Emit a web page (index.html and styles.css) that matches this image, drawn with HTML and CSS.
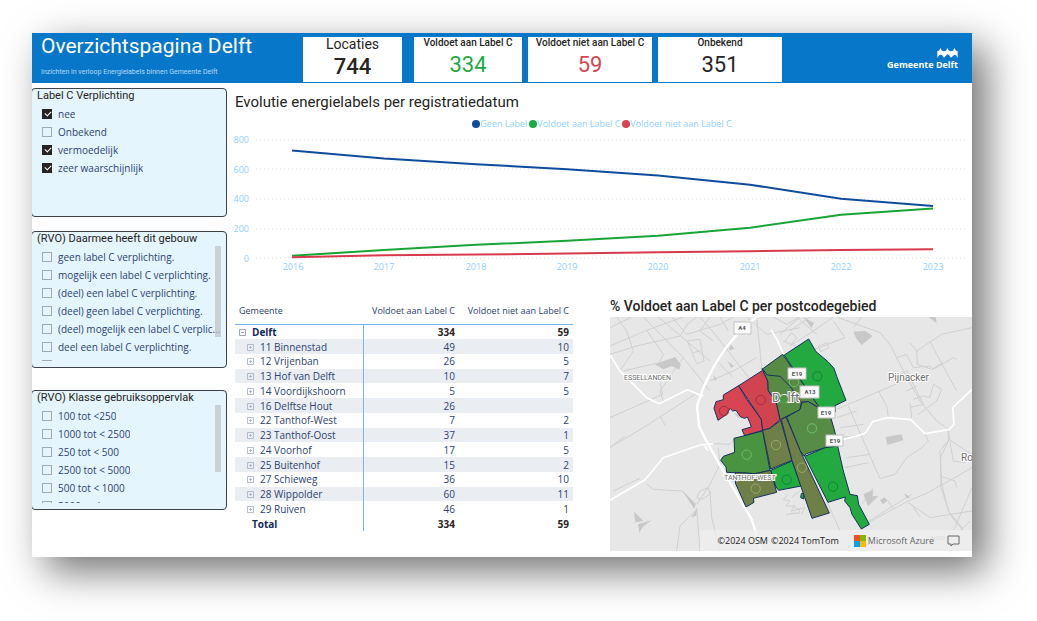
FILE: index.html
```html
<!DOCTYPE html>
<html lang="nl">
<head>
    <meta charset="UTF-8">
    <meta name="viewport" content="width=device-width, initial-scale=1.0">
    <title>Overzichtspagina Delft</title>
    <link rel="stylesheet" href="styles.css">
</head>
<body>
    <svg width="0" height="0" class="symbols" aria-hidden="true">
        <symbol id="plus" viewBox="0 0 7 7"><path d="M.5.5h6v6h-6zM2 3.5h3M3.5 2v3" fill="none" stroke="#a3afc4" stroke-width=".8"/></symbol>
        <symbol id="minus" viewBox="0 0 7 7"><path d="M.5.5h6v6h-6zM2 3.5h3" fill="none" stroke="#8291ad" stroke-width=".8"/></symbol>
    </svg>
    <div class="report">
        <header class="top">
            <div class="title">
                <h1>Overzichtspagina Delft</h1>
                <p>Inzichten in verloop Energielabels binnen Gemeente Delft</p>
            </div>
            <div class="card big"><h2>Locaties</h2><b>744</b></div>
            <div class="card second"><h2>Voldoet aan Label C</h2><b class="green">334</b></div>
            <div class="card"><h2>Voldoet niet aan Label C</h2><b class="red">59</b></div>
            <div class="card"><h2>Onbekend</h2><b>351</b></div>
            <div class="logo">
                <svg width="21" height="10" viewBox="0 0 63 30" aria-hidden="true">
                    <path d="M1 9L6 8 10 0 15 8 21 10 27 8 31 0 36 8 42 10 48 8 52 0 57 8 62 9V30L57 22 52 20 42 29 36 21 31 19 21 29 15 21 10 20 6 22 1 30z" fill="#fff"/>
                </svg>
                <span>Gemeente Delft</span>
            </div>
        </header>

        <div class="main">
            <aside>
                <fieldset class="slicer">
                    <legend>Label C Verplichting</legend>
                    <div class="list medium">
                        <label><input type="checkbox" checked><span>nee</span></label>
                        <label><input type="checkbox"><span>Onbekend</span></label>
                        <label><input type="checkbox" checked><span>vermoedelijk</span></label>
                        <label><input type="checkbox" checked><span>zeer waarschijnlijk</span></label>
                    </div>
                </fieldset>
                <fieldset class="slicer middle">
                    <legend>(RVO) Daarmee heeft dit gebouw</legend>
                    <div class="list tall">
                        <label><input type="checkbox"><span>geen label C verplichting.</span></label>
                        <label><input type="checkbox"><span>mogelijk een label C verplichting.</span></label>
                        <label><input type="checkbox"><span>(deel) een label C verplichting.</span></label>
                        <label><input type="checkbox"><span>(deel) geen label C verplichting.</span></label>
                        <label><input type="checkbox"><span>(deel) mogelijk een label C verplichting.</span></label>
                        <label><input type="checkbox"><span>deel een label C verplichting.</span></label>
                        <label><input type="checkbox" aria-label="Volgende optie"></label>
                        <i class="thumb"></i>
                    </div>
                </fieldset>
                <fieldset class="slicer last">
                    <legend>(RVO) Klasse gebruiksoppervlak</legend>
                    <div class="list">
                        <label><input type="checkbox"><span>100 tot &lt;250</span></label>
                        <label><input type="checkbox"><span>1000 tot &lt; 2500</span></label>
                        <label><input type="checkbox"><span>250 tot &lt; 500</span></label>
                        <label><input type="checkbox"><span>2500 tot &lt; 5000</span></label>
                        <label><input type="checkbox"><span>500 tot &lt; 1000</span></label>
                        <label><input type="checkbox"><span>5000 en hoger</span></label>
                        <i class="thumb short"></i>
                    </div>
                </fieldset>
            </aside>

            <div class="content">
                <section class="chart">
                    <h2>Evolutie energielabels per registratiedatum</h2>
                    <ul class="legend">
                        <li><i class="blue"></i>Geen Label</li>
                        <li><i class="green"></i>Voldoet aan Label C</li>
                        <li><i class="red"></i>Voldoet niet aan Label C</li>
                    </ul>
                    <svg viewBox="232 131 740 144" role="img" aria-label="Evolutie energielabels">
                        <g class="grid">
                            <path d="M256 140H968M256 169H968M256 199H968M256 229H968M256 258H968"/>
                        </g>
                        <g class="axis">
                            <text x="249" y="143">800</text>
                            <text x="249" y="173">600</text>
                            <text x="249" y="202">400</text>
                            <text x="249" y="232">200</text>
                            <text x="249" y="262">0</text>
                        </g>
                        <g class="axis years">
                            <text x="293" y="270">2016</text>
                            <text x="384" y="270">2017</text>
                            <text x="476" y="270">2018</text>
                            <text x="567" y="270">2019</text>
                            <text x="658" y="270">2020</text>
                            <text x="750" y="270">2021</text>
                            <text x="841" y="270">2022</text>
                            <text x="933" y="270">2023</text>
                        </g>
                        <g class="lines">
                            <path stroke="#0f4c9c" d="M292 150.6L384 158.5 476 164.2 567 169.3 658 175.6 750 184.7 841 198.8 933 206"/>
                            <path stroke="#18a535" d="M292 255.8L384 250 476 244.8 567 240.8 658 235.8 750 227.7 841 214.8 933 208.4"/>
                            <path stroke="#d8394c" d="M292 257.2L384 255.3 476 254.6 567 253.5 658 252.3 750 251.2 841 250 933 249.3"/>
                        </g>
                    </svg>
                </section>

                <div class="bottom">
                    <table>
                        <thead>
                            <tr><th>Gemeente</th><th>Voldoet aan Label C</th><th>Voldoet niet aan Label C</th></tr>
                        </thead>
                        <tbody>
                            <tr class="total"><th><button aria-label="Inklappen"><svg><use href="#minus"/></svg></button>Delft</th><td>334</td><td>59</td></tr>
                            <tr><th><button aria-label="Uitklappen"><svg><use href="#plus"/></svg></button>11 Binnenstad</th><td>49</td><td>10</td></tr>
                            <tr><th><button aria-label="Uitklappen"><svg><use href="#plus"/></svg></button>12 Vrijenban</th><td>26</td><td>5</td></tr>
                            <tr><th><button aria-label="Uitklappen"><svg><use href="#plus"/></svg></button>13 Hof van Delft</th><td>10</td><td>7</td></tr>
                            <tr><th><button aria-label="Uitklappen"><svg><use href="#plus"/></svg></button>14 Voordijkshoorn</th><td>5</td><td>5</td></tr>
                            <tr><th><button aria-label="Uitklappen"><svg><use href="#plus"/></svg></button>16 Delftse Hout</th><td>26</td><td></td></tr>
                            <tr><th><button aria-label="Uitklappen"><svg><use href="#plus"/></svg></button>22 Tanthof-West</th><td>7</td><td>2</td></tr>
                            <tr><th><button aria-label="Uitklappen"><svg><use href="#plus"/></svg></button>23 Tanthof-Oost</th><td>37</td><td>1</td></tr>
                            <tr><th><button aria-label="Uitklappen"><svg><use href="#plus"/></svg></button>24 Voorhof</th><td>17</td><td>5</td></tr>
                            <tr><th><button aria-label="Uitklappen"><svg><use href="#plus"/></svg></button>25 Buitenhof</th><td>15</td><td>2</td></tr>
                            <tr><th><button aria-label="Uitklappen"><svg><use href="#plus"/></svg></button>27 Schieweg</th><td>36</td><td>10</td></tr>
                            <tr><th><button aria-label="Uitklappen"><svg><use href="#plus"/></svg></button>28 Wippolder</th><td>60</td><td>11</td></tr>
                            <tr><th><button aria-label="Uitklappen"><svg><use href="#plus"/></svg></button>29 Ruiven</th><td>46</td><td>1</td></tr>
                            <tr class="total sum"><th>Total</th><td>334</td><td>59</td></tr>
                        </tbody>
                    </table>

                    <section class="map">
                        <h2>% Voldoet aan Label C per postcodegebied</h2>
                        <div class="canvas">
                            <svg viewBox="0 0 362 234" role="img" aria-label="Kaart van Delft">
                                <rect width="362" height="234" fill="#e7e7e7"/>
                                <!-- west side -->
                                <g transform="translate(-10 -26) scale(.33333)">
                                    <g class="minor">
                                        <path d="M30 110L95 78M30 165L140 118 250 78M30 190L110 165 240 135 262 100 290 78M60 240L100 180 80 120 50 78M130 78L250 200 330 300M140 118L190 190 178 215 70 240M175 78L330 210M215 78L260 130 360 100 400 78M262 150L300 145 312 210 290 218 262 150M280 185L305 178M300 78L345 130 470 290M330 78L300 120 340 150M360 78L385 120M440 78L500 130 600 110M385 170L350 210 400 260M470 200L400 240 330 270M250 200L180 300 190 330M180 275L188 310 30 380M285 310L130 410 30 470M180 375L196 404M340 458L390 460 405 440M355 470L360 520 330 580 290 640M290 650L300 780M290 655L240 705 230 780M140 578L160 595 245 600 288 640M120 562L40 600M330 600L335 680 360 780M300 600L325 590 330 610 305 625 290 620zM520 78L560 100 600 78M555 150L575 125 590 140 570 165M540 130L600 78M550 150L600 170"/>
                                        <path d="M470 78L485 230 500 260M30 470L75 435" stroke-width="5"/>
                                        <path d="M565 610l-15 15 20 5-12 15 25 0-10 15 25-5 0 12-25 0-15 5M600 600l-25 18" stroke="#bfbfbf" stroke-width="3"/>
                                    </g>
                                    <g class="patch">
                                        <path d="M165 220L225 198 242 220 238 236 215 225 190 235zM392 160l12 14-18 4zM382 210l20 15-8 6zM102 662l28 28-24 4zM114 700l40-12-26 20-10 17zM400 365l20 5-2 12zM338 250l12 14-4 6zM245 596l42 44-4 14zM272 680l20-26-4 20z"/>
                                    </g>
                                    <g class="major">
                                        <path d="M470 78C400 130 345 210 310 290L291 345 297 405C325 465 380 560 455 685L485 780" stroke-width="7"/>
                                        <path d="M30 192L60 240 140 320 178 338 262 296 310 316M30 628L135 566 190 500 300 462 340 458M312 462l12 18M513 116l18 30 20 44" stroke-width="5"/>
                                    </g>
                                </g>
                                <!-- east side -->
                                <g transform="translate(180 -26) scale(.33333)">
                                    <g class="minor">
                                        <path d="M0 120L60 78M0 165L70 120 130 78M20 78L80 130M60 180L165 140 130 90M85 165L112 155 117 170 92 182zM140 78L270 125 300 160 340 240 390 330 440 390 475 415M215 78L190 110M546 110L455 130 380 180 382 220 425 235 460 215M420 150L440 190 500 300M360 155L382 182M320 200L350 190 370 230 420 225 430 235 490 200 500 205M330 250L350 240 400 340 360 350M350 300L380 285M370 325L400 315 420 320 430 280 455 295 440 330 385 370M360 335L365 380M140 355L270 300 340 270M175 345L270 563 315 550 350 500 395 470 415 450 405 428M265 300L290 345 295 380M140 380L200 360M150 410L220 400M150 440L230 430M170 500L240 490M165 530L235 515M475 415L478 445 450 480 455 580 415 605 355 630 225 700M475 445L546 490M480 455L490 510 525 515 530 500M546 530L450 585M455 580L475 660 520 715M500 590L495 570 450 555M355 635L420 680 546 660M490 720L546 590M365 640L390 678M345 610L360 620M110 630L150 720M290 625L310 650M250 590L215 640M540 690L510 720" />
                                        <path d="M475 415L475 450 452 500 453 590 480 670 520 720M238 690L365 610" stroke-width="5"/>
                                        <path d="M10 640l10 15 25-5-10 20M0 670l20-5" stroke="#bfbfbf" stroke-width="3"/>
                                    </g>
                                    <g class="patch">
                                        <path d="M190 122L225 120 248 135 215 162 200 145zM287 438L335 430 340 448 292 462zM415 78L437 78 440 97zM220 610l30-14-2 20 18-2-32 32zM270 628l14-10 7 12-12 10zM342 608l18 10-8 5zM40 78l32 18-8 14z"/>
                                    </g>
                                    <g class="major">
                                        <path d="M150 448L225 428 248 392 292 380 362 386 405 428 478 415 492 400 488 350 546 295" stroke-width="5"/>
                                    </g>
                                </g>
                                <!-- postcode areas -->
                                <g transform="translate(90 14) scale(.33333)">
                                    <g class="areas">
                                        <path fill="#22a940" d="M253 72L326 24 348 62 384 92 402 112 410 136 438 208 405 224 406 242 390 262 355 228z"/>
                                        <path fill="#578b44" d="M190 112L248 70 360 232 325 212 304 214 300 236 240 266 228 212 204 178 203 150 186 115z"/>
                                        <path fill="#568c45" d="M260 258L300 236 306 214 325 212 365 236 393 262 404 300 413 342 376 356 375 350 320 368 312 375 300 358z"/>
                                        <path fill="none" d="M186 112L202 132 240 136 272 168 304 214"/>
                                        <path fill="#d74452" d="M42 232L48 212 70 206 70 192 116 164 140 205 184 265 188 298 134 314 126 296 154 288 150 276 142 258 134 262 122 258 108 238 98 240 90 232 80 250 54 268z"/>
                                        <path fill="#d04450" d="M116 164L188 118 203 150 204 178 228 212 240 266 210 292 188 298 184 265z"/>
                                        <path fill="#489440" d="M102 322L188 300 210 418 166 428 80 424 78 408 62 388 70 376 104 364z"/>
                                        <path fill="#6e7f47" d="M188 298L210 292 242 268 276 388 212 414z"/>
                                        <path fill="#22a940" d="M212 418L276 390 304 465 236 478 228 468z"/>
                                        <path fill="#6e7f47" d="M106 424L166 428 212 418 230 484 160 502 162 514 138 528 106 456z"/>
                                        <path fill="#22a940" d="M314 376L376 350 413 345 430 420 450 490 472 494 476 520 508 580 484 594 456 550 450 530 434 510 436 498 384 514z"/>
                                        <path fill="#22a940" d="M304 488l8-2-1 18-9-4z"/>
                                        <path fill="#6e7f47" d="M244 266L258 258 276 300 300 358 388 546 336 562 304 470 276 388z"/>
                                    </g>
                                    <g fill="none" stroke-width="3">
                                        <g stroke="#138234"><circle cx="352" cy="136" r="14"/><circle cx="260" cy="446" r="14"/><circle cx="399" cy="467" r="14"/></g>
                                        <g stroke="#a52c3c"><circle cx="182" cy="207" r="14"/><circle cx="72" cy="240" r="14"/></g>
                                        <g stroke="#6fbf68"><circle cx="282" cy="153" r="14"/><circle cx="336" cy="292" r="14"/><circle cx="140" cy="371" r="14"/></g>
                                        <g stroke="#9aa96a"><circle cx="228" cy="342" r="14"/><circle cx="306" cy="410" r="14"/><circle cx="167" cy="473" r="14"/></g>
                                    </g>
                                </g>
                                <g class="places">
                                    <text x="162" y="85" class="city">Delft</text>
                                    <text x="278" y="64" class="town">Pijnacker</text>
                                    <text x="351" y="144" class="town">Ro</text>
                                    <text x="14" y="63" class="quarter">ESSELLANDEN</text>
                                    <text x="114" y="163" class="quarter">TANTHOF-WEST</text>
                                </g>
                                <circle cx="174" cy="82" r="4" fill="#4a963f"/>
                                <g class="shields">
                                    <rect x="124" y="5" width="17" height="12"/><text x="132" y="13">A4</text>
                                    <rect x="178" y="51" width="18" height="11"/><text x="187" y="59">E19</text>
                                    <rect x="190" y="69" width="19" height="12"/><text x="200" y="77">A13</text>
                                    <rect x="208" y="90" width="17" height="11"/><text x="216" y="98">E19</text>
                                    <rect x="216" y="118" width="17" height="11"/><text x="225" y="126">E19</text>
                                </g>
                                <text x="321" y="223" class="faint">N209</text>
                            </svg>
                            <div class="credits">
                                <span>©2024 OSM</span>
                                <span>©2024 TomTom</span>
                                <span class="azure">
                                    <svg width="12" height="12" viewBox="0 0 12 12" aria-hidden="true">
                                        <path fill="#f25022" d="M0 0h6v6H0z"/><path fill="#7fba00" d="M6 0h6v6H6z"/><path fill="#00a4ef" d="M0 6h6v6H0z"/><path fill="#ffb900" d="M6 6h6v6H6z"/>
                                    </svg>
                                    Microsoft Azure
                                </span>
                                <button aria-label="Feedback">
                                    <svg width="13" height="12" viewBox="0 0 13 12"><path d="M1 1h11v8H6l-2 2V9H1z" fill="none" stroke="#666"/></svg>
                                </button>
                            </div>
                        </div>
                    </section>
                </div>
            </div>
        </div>
    </div>
</body>
</html>
```

FILE: styles.css
```css
* {
    margin: 0;
    padding: 0;
    box-sizing: border-box;
}

body {
    padding: 33px 65px 65px 32px;
    background: #fff;
    font-family: "Open Sans", "Noto Sans", sans-serif;
    font-size: 10px;
    color: #2c4270;
}

h1, h2, legend, .card b {
    font-family: Roboto, "Liberation Sans", sans-serif;
    font-weight: 400;
    color: #252423;
}

.symbols {
    position: absolute;
}

.report {
    background: #fff;
    box-shadow: 14px 14px 38px 0 rgba(0, 0, 0, 0.56);
    overflow: hidden;
}

/* header */
.top {
    display: grid;
    grid-template-columns: 265fr 99fr 114fr 124fr 124fr 184fr;
    column-gap: 6px;
    height: 50px;
    padding: 4px 0;
    background: #0777c9;
}

.title {
    padding-left: 9px;
    white-space: nowrap;
}

.title h1 {
    font-size: 21px;
    line-height: 18px;
    color: #fff;
}

.title p {
    margin-top: 12px;
    font-family: Roboto, sans-serif;
    font-size: 7px;
    line-height: 10px;
    color: #b5daf5;
}

.card {
    background: #fff;
    text-align: center;
    white-space: nowrap;
}

.card.second {
    margin-left: 6px;
}

.card h2 {
    font-size: 10px;
    font-weight: 500;
    line-height: 11px;
}

.card b {
    display: block;
    font-size: 22px;
    line-height: 34px;
}

.card.big h2 {
    font-size: 14px;
    font-weight: 400;
    line-height: 15px;
}

.card.big b {
    line-height: 30px;
    font-weight: 500;
}

.card b.green {
    color: #1aab40;
}

.card b.red {
    color: #d64550;
}

.logo {
    display: flex;
    flex-direction: column;
    align-items: flex-end;
    padding: 11px 14px 0 0;
    font-size: 9px;
    font-weight: 700;
    line-height: 14px;
    color: #fff;
}

/* body */
.main {
    display: grid;
    grid-template-columns: 195px 1fr;
    padding-top: 5px;
}

.slicer {
    min-width: 0;
    margin-left: -1px;
    padding: 0 5px 6px;
    border: 1px solid #3c4248;
    border-radius: 4px;
    background: #e4f5fe;
}

.slicer.middle {
    margin-top: 14px;
}

.slicer.last {
    margin-top: 22px;
}

.slicer legend {
    float: left;
    width: 100%;
    font-size: 11px;
    line-height: 14px;
    white-space: nowrap;
}

.list {
    position: relative;
    clear: both;
    height: 98px;
    padding-top: 2px;
    overflow: hidden;
}

.list.medium {
    height: 107px;
}

.list.tall {
    height: 115px;
}

.list label {
    display: flex;
    align-items: center;
    height: 18px;
    padding-left: 5px;
}

.list label span {
    padding-left: 6px;
    overflow: hidden;
    text-overflow: ellipsis;
    white-space: nowrap;
}

.list input {
    flex: none;
    position: relative;
    width: 10px;
    height: 10px;
    border: 1px solid #9fabb0;
    appearance: none;
}

.list input:checked {
    border-color: #252423;
    background: #252423;
}

.list input:checked::after {
    content: "";
    position: absolute;
    left: 2px;
    top: 1px;
    width: 5px;
    height: 3px;
    border: solid #fff;
    border-width: 0 0 1px 1px;
    transform: rotate(-45deg);
}

.thumb {
    position: absolute;
    top: 0;
    right: 0;
    width: 6px;
    height: 91px;
    background: rgba(190, 194, 198, 0.7);
}

.thumb.short {
    height: 67px;
}

/* chart */
.content {
    padding-left: 5px;
}

.chart h2 {
    padding: 5px 0 0 3px;
    font-size: 15px;
    line-height: 18px;
}

.legend {
    display: flex;
    justify-content: center;
    gap: 2px;
    margin-top: 5px;
    list-style: none;
    font-size: 9px;
    line-height: 15px;
    color: #8ed0ff;
}

.legend li {
    display: flex;
    align-items: center;
}

.legend i {
    width: 8px;
    height: 8px;
    border-radius: 50%;
}

.legend .blue {
    background: #0f4c9c;
}

.legend .green {
    background: #1aab40;
}

.legend .red {
    background: #d64550;
}

.chart svg {
    display: block;
    width: 100%;
}

.grid path {
    stroke: #dedede;
    stroke-dasharray: 1 3;
}

.axis text {
    font-size: 9px;
    fill: #8ed0ff;
    text-anchor: end;
}

.axis.years text {
    text-anchor: middle;
}

.lines path {
    fill: none;
    stroke-width: 2;
}

/* table and map */
.bottom {
    display: grid;
    grid-template-columns: 338fr 362fr;
    column-gap: 37px;
    align-items: start;
    padding: 21px 0 6px 3px;
}

table {
    width: 100%;
    height: 230px;
    margin-top: 5px;
    border-collapse: collapse;
    table-layout: fixed;
    font-size: 10px;
    line-height: 14px;
    white-space: nowrap;
}

th {
    font-weight: 400;
    text-align: left;
}

td, th + th {
    padding-right: 4px;
    text-align: right;
}

th:first-child {
    width: 128px;
    border-right: 1px solid #72b7f5;
}

th:nth-child(2) {
    width: 96px;
}

thead th {
    height: 23px;
    padding-bottom: 2px;
    border-bottom: 1px solid #72b7f5;
    font-size: 9px;
}

thead th:first-child {
    padding-left: 4px;
    border-right: 0;
}

tbody th {
    padding-left: 12px;
}

tbody tr:nth-child(even):not(.total) {
    background: #eaeef2;
}

.total th, .total td {
    font-weight: 700;
}

.total th {
    padding-left: 4px;
    color: #12295c;
}

.total td {
    color: #252423;
}

.total.sum th {
    padding-left: 17px;
}

button {
    border: 0;
    background: none;
}

th button {
    width: 7px;
    height: 7px;
    margin-right: 6px;
}

th button svg {
    display: block;
    width: 7px;
    height: 7px;
}

.map h2 {
    font-size: 14px;
    font-weight: 500;
    line-height: 21px;
    white-space: nowrap;
}

.canvas {
    position: relative;
}

.canvas > svg {
    display: block;
    width: 100%;
}

.minor path {
    fill: none;
    stroke: #d0d0d0;
    stroke-width: 3;
}

.patch path {
    fill: #c8c8c8;
}

.major path {
    fill: none;
    stroke: #fff;
    stroke-linejoin: round;
}

.areas path {
    stroke: #16305e;
    stroke-width: 3;
    stroke-linejoin: round;
}

.places text {
    fill: #6b6b6b;
    stroke: #fff;
    stroke-width: 2px;
    paint-order: stroke;
    font-family: Roboto, sans-serif;
}

.places .city {
    font-size: 13px;
}

.places .town {
    font-size: 10px;
}

.places .quarter {
    font-size: 7px;
}

.shields rect {
    fill: #fafafa;
    stroke: #c4c4c4;
}

.shields text {
    font: 700 6px Roboto, sans-serif;
    fill: #555;
    text-anchor: middle;
}

.faint {
    font: 6px Roboto, sans-serif;
    fill: #aaa;
}

.credits {
    position: absolute;
    right: 0;
    bottom: 0;
    display: flex;
    align-items: center;
    gap: 3px;
    height: 21px;
    padding: 0 12px 0 18px;
    background: rgba(240, 240, 240, 0.7);
    font-size: 9px;
    color: #222;
    white-space: nowrap;
}

.azure {
    display: flex;
    align-items: center;
    gap: 2px;
    margin: 0 10px 0 12px;
    color: #666;
}

.credits button svg {
    display: block;
}
```
